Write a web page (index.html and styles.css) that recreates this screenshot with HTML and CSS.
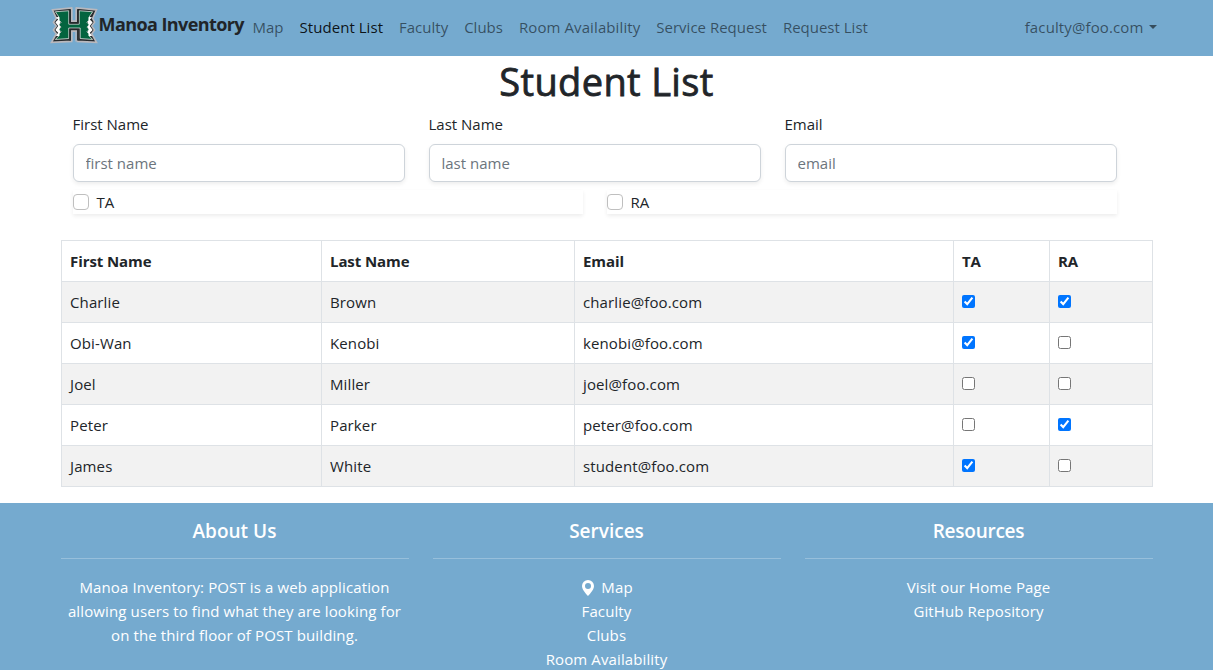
FILE: index.html
```html
<!DOCTYPE html>
<html lang="en">
<head>
<meta charset="utf-8">
<title>Manoa Inventory</title>
<link rel="stylesheet" href="styles.css">
</head>
<body>
<nav class="navbar">
  <div class="nav-inner">
    <a class="brand">
      <svg class="logo" viewBox="-1.500 0 52 46">
        <path d="M2 4L22 2V16H27V2L48 4L44 13L46 17L43 21L46 25L43 29L48 38L28 37V26H22V37L1 38L6 29L3 25L6 21L3 17L6 13Z" fill="#272b2d" stroke="#b9b8bd" stroke-width="1.700"/>
        <path d="M5.500 12L10 11V32L5.500 31L8 28L5 25L8 21L5 17L8 14ZM43.500 12L39 11V32L43.500 31L41 28L44 25L41 21L44 17L41 14Z" fill="#fff"/>
        <path d="M5 6L19 5V19H30V5L44 6L40 12V15L38 17L40 19V20L38 22L40 24V25L38 27L40 29V31L44 35L31 34V23H19V34L5 35L9 31V29L11 27L9 25V24L11 22L9 20V19L11 17L9 15V12Z" fill="#04643f" stroke="#fff" stroke-width=".7"/>
        <path d="M20.500 4V17.500H28.500V4M20.500 36V24.500H28.500V36" fill="none" stroke="#252a2b" stroke-width="1.600"/>
        <path d="M22.500 2V15.500H26.500V2M22.500 37V26.500H26.500V37" fill="#75aacf" stroke="#b9b8bd" stroke-width="1.200"/>
      </svg>
      <span>Manoa Inventory</span>
    </a>
    <div class="nav-links">
      <a>Map</a><a class="active">Student List</a><a>Faculty</a><a>Clubs</a><a>Room Availability</a><a>Service Request</a><a>Request List</a>
    </div>
    <a class="user">faculty@foo.com<i class="caret"></i></a>
  </div>
</nav>
<main class="content">
  <h1>Student List</h1>
  <form class="filters">
    <div class="fields">
      <label>First Name<input type="text" placeholder="first name"></label>
      <label>Last Name<input type="text" placeholder="last name"></label>
      <label>Email<input type="text" placeholder="email"></label>
    </div>
    <div class="checks">
      <label><input type="checkbox" class="check">TA</label>
      <label><input type="checkbox" class="check">RA</label>
    </div>
  </form>
  <table class="students">
    <colgroup><col class="c-first"><col class="c-last"><col class="c-email"><col class="c-ta"><col class="c-ra"></colgroup>
    <thead><tr><th>First Name</th><th>Last Name</th><th>Email</th><th>TA</th><th>RA</th></tr></thead>
    <tbody>
      <tr><td>Charlie</td><td>Brown</td><td>charlie@foo.com</td><td><input type="checkbox" checked></td><td><input type="checkbox" checked></td></tr>
      <tr><td>Obi-Wan</td><td>Kenobi</td><td>kenobi@foo.com</td><td><input type="checkbox" checked></td><td><input type="checkbox"></td></tr>
      <tr><td>Joel</td><td>Miller</td><td>joel@foo.com</td><td><input type="checkbox"></td><td><input type="checkbox"></td></tr>
      <tr><td>Peter</td><td>Parker</td><td>peter@foo.com</td><td><input type="checkbox"></td><td><input type="checkbox" checked></td></tr>
      <tr><td>James</td><td>White</td><td>student@foo.com</td><td><input type="checkbox" checked></td><td><input type="checkbox"></td></tr>
    </tbody>
  </table>
</main>
<footer class="footer">
  <div class="footer-inner">
    <section><h5>About Us</h5><hr><p>Manoa Inventory: POST is a web application<br>allowing users to find what they are looking for<br>on the third floor of POST building.</p></section>
    <section><h5>Services</h5><hr><p><svg class="pin" viewBox="0 0 16 16"><path fill="#fff" d="M8 16s6-5.686 6-10A6 6 0 0 0 2 6c0 4.314 6 10 6 10m0-7a3 3 0 1 1 0-6 3 3 0 0 1 0 6"/></svg> Map<br>Faculty<br>Clubs<br>Room Availability</p></section>
    <section><h5 class="tight">Resources</h5><hr><p>Visit our Home Page<br>GitHub Repository</p></section>
  </div>
</footer>
</body>
</html>
```
FILE: styles.css
```css
* { box-sizing: border-box; }
html, body { height: 100%; }
body { margin: 0; overflow: hidden; display: flex; flex-direction: column; background: #fff; color: #212529; font: 15px/24px "Open Sans", "Noto Sans", sans-serif; }
.navbar { flex: none; height: 56px; background: #75aacf; }
.nav-inner { display: flex; align-items: center; width: 1116px; height: 54px; margin: 0 auto; }
.brand { display: flex; align-items: flex-start; width: 196px; height: 44px; margin-top: 1px; font-size: 18px; font-weight: 700; line-height: 36px; letter-spacing: -.58px; white-space: nowrap; }
.logo { width: 50px; height: 44px; flex: none; }
.nav-links { display: flex; flex: 1; color: rgba(0, 0, 0, .55); letter-spacing: 0; }
.nav-links a { padding: 0 8px; white-space: nowrap; }
.nav-links a:nth-child(5) { letter-spacing: .1px; }
.nav-links .active { color: rgba(0, 0, 0, .9); letter-spacing: .05px; }
.user { display: flex; align-items: center; padding-right: 8px; color: rgba(0, 0, 0, .55); letter-spacing: .12px; }
.caret { margin-left: 5px; border: 4px solid transparent; border-top-color: currentColor; border-bottom: 0; }
.content { flex: none; width: 1092px; margin: 0 auto; }
h1 { margin: 0; padding-top: 1px; height: 56px; font-size: 38px; line-height: 48px; font-weight: 400; letter-spacing: .35px; -webkit-text-stroke: .8px #212529; text-align: center; }
.filters { padding: 0 36px 0 12px; }
.fields { display: grid; grid-template-columns: repeat(3, 1fr); gap: 24px; }
.fields label { display: block; }
.fields input { display: block; width: 100%; height: 38px; margin-top: 8px; padding: 6px 12px; border: 1px solid #ced4da; border-radius: 6px; font: inherit; box-shadow: 0 2px 4px rgba(0, 0, 0, .075); }
.fields input::placeholder { color: #6c757d; }
.checks { display: grid; grid-template-columns: 1fr 1fr; gap: 24px; margin-top: 8px; }
.checks label { display: flex; align-items: center; height: 24px; box-shadow: 0 2px 4px rgba(0, 0, 0, .075); }
.check { appearance: none; width: 16px; height: 16px; margin: 0 8px 0 0; border: 1px solid #bfbfbf; border-radius: 4px; background: #fff; }
.students { width: 1092px; margin-top: 26px; border-collapse: collapse; table-layout: fixed; }
.c-first { width: 260px; }
.c-last { width: 253px; }
.c-email { width: 379px; }
.c-ta { width: 96px; }
.students th, .students td { height: 41px; padding: 8px 8px 8px 8.5px; border: 1px solid #dee2e6; text-align: left; }
.students td { letter-spacing: .12px; }
.students th { font-weight: 700; letter-spacing: -.08px; }
.students tbody tr:nth-child(odd) { background: #f2f2f2; }
.students input { display: block; width: 13px; height: 13px; margin: -2px 0 0 -.5px; }
.footer { flex: 1; min-height: 0; overflow: hidden; margin-top: 16px; background: #75aacf; color: #fff; text-align: center; }
.footer-inner { display: grid; grid-template-columns: repeat(3, 1fr); gap: 24px; width: 1092px; margin: 0 auto; padding-top: 16px; }
h5 { margin: 0; font-size: 19px; line-height: 24px; font-weight: 600; }
.tight { letter-spacing: -.25px; }
hr { height: 1px; margin: 15px 0 16px; border: 0; background: rgba(255, 255, 255, .25); }
.footer p { margin: 0; white-space: nowrap; letter-spacing: .12px; }
.pin { width: 16px; height: 16px; margin-right: 1px; vertical-align: -3px; }
```
